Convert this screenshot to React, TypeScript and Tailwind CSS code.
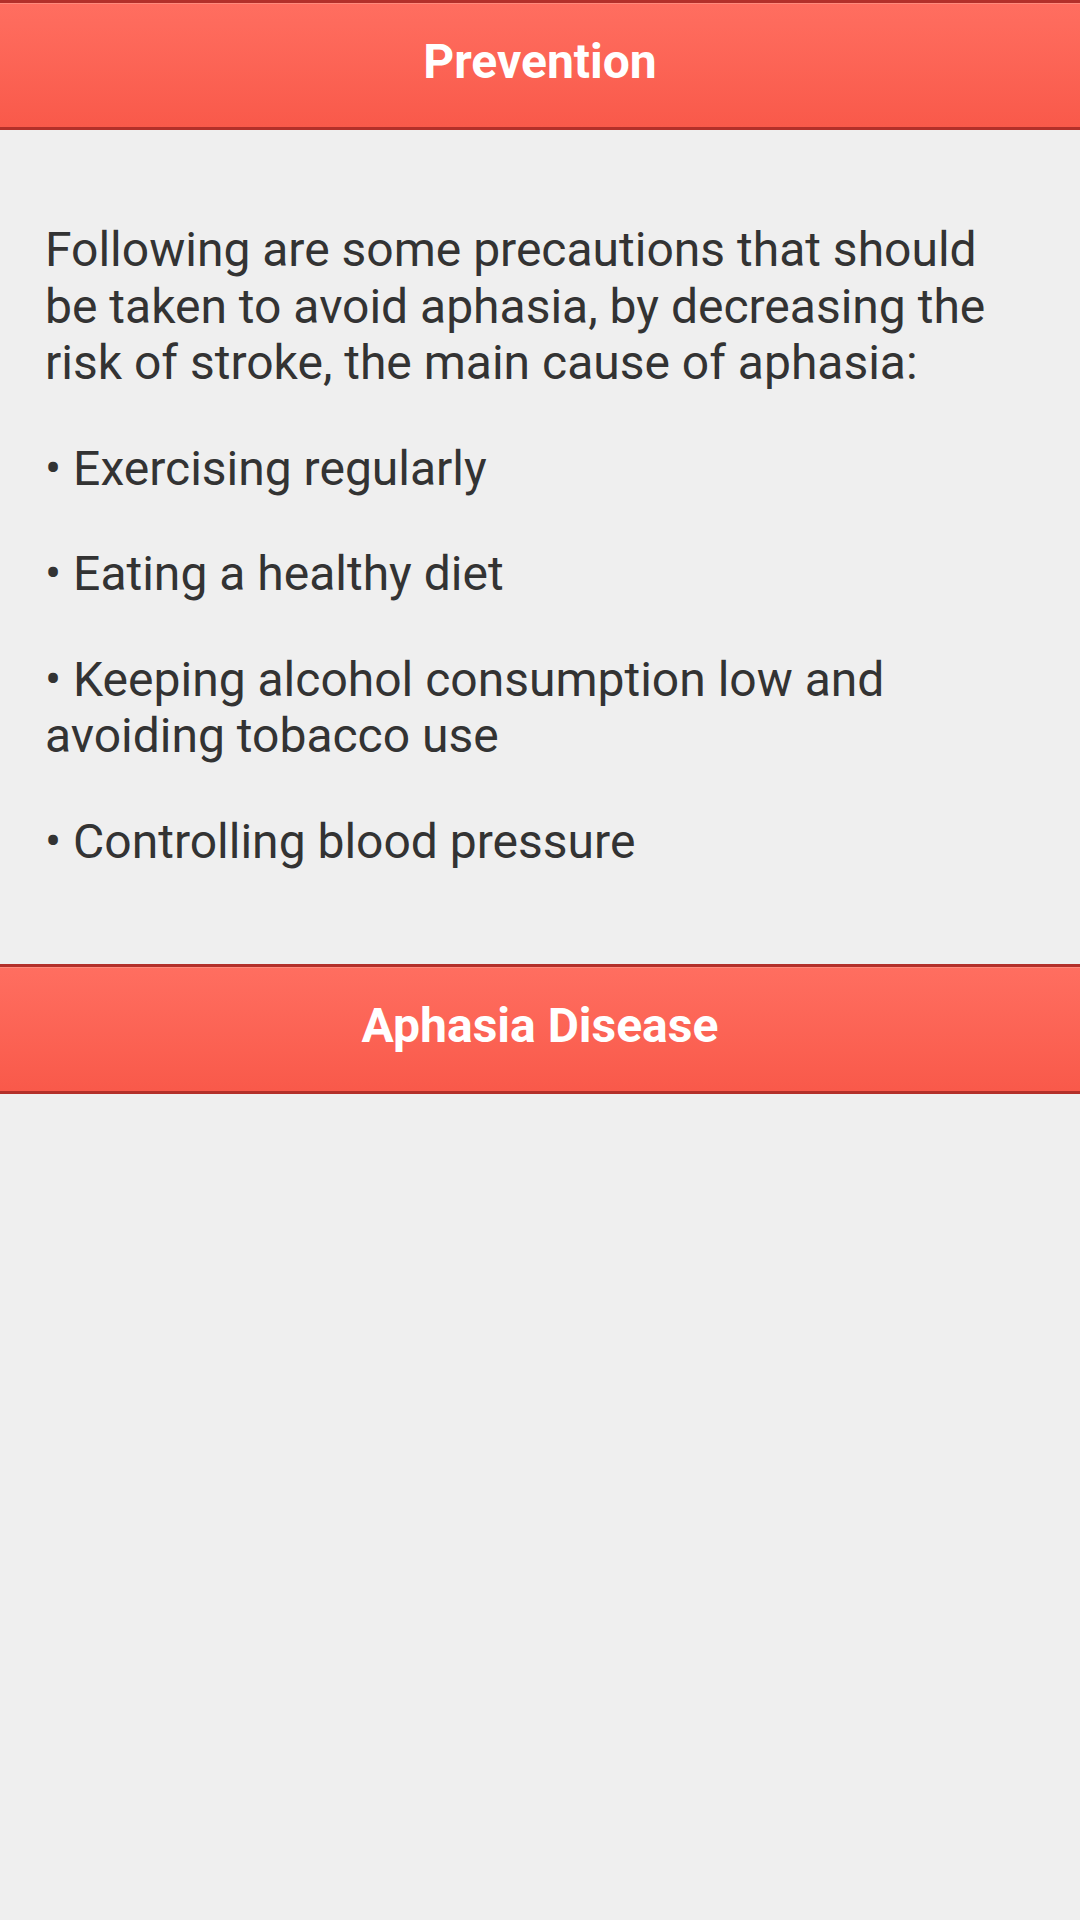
import React from 'react';

const items = [
  'Following are some precautions that should be taken to avoid aphasia, by decreasing the risk of stroke, the main cause of aphasia:',
  '• Exercising regularly',
  '• Eating a healthy diet',
  '• Keeping alcohol consumption low and avoiding tobacco use',
  '• Controlling blood pressure',
];

const Header: React.FC<{ title: string }> = ({ title }) => (
  <div className="h-[130px] border-y-[3px] border-[#b3302a] bg-gradient-to-b from-[#ff6e60] to-[#f9594a] shadow-[inset_0_1px_0_#ff8a7c] flex items-center justify-center pb-[6px]">
    <h1 className="text-[48px] font-bold text-white leading-none">{title}</h1>
  </div>
);

export default function App() {
  return (
    <div className="min-h-[1920px] bg-[#efefef] font-['Roboto',sans-serif]">
      <Header title="Prevention" />

      <div className="pl-[45px] pr-[40px] pt-[43px] pb-[45px]">
        {items.map((text, i) => (
          <p key={i} className="my-[49px] text-[48px] leading-[56.5px] text-[#333333]">
            {text}
          </p>
        ))}
      </div>

      <Header title="Aphasia Disease" />
    </div>
  );
}
